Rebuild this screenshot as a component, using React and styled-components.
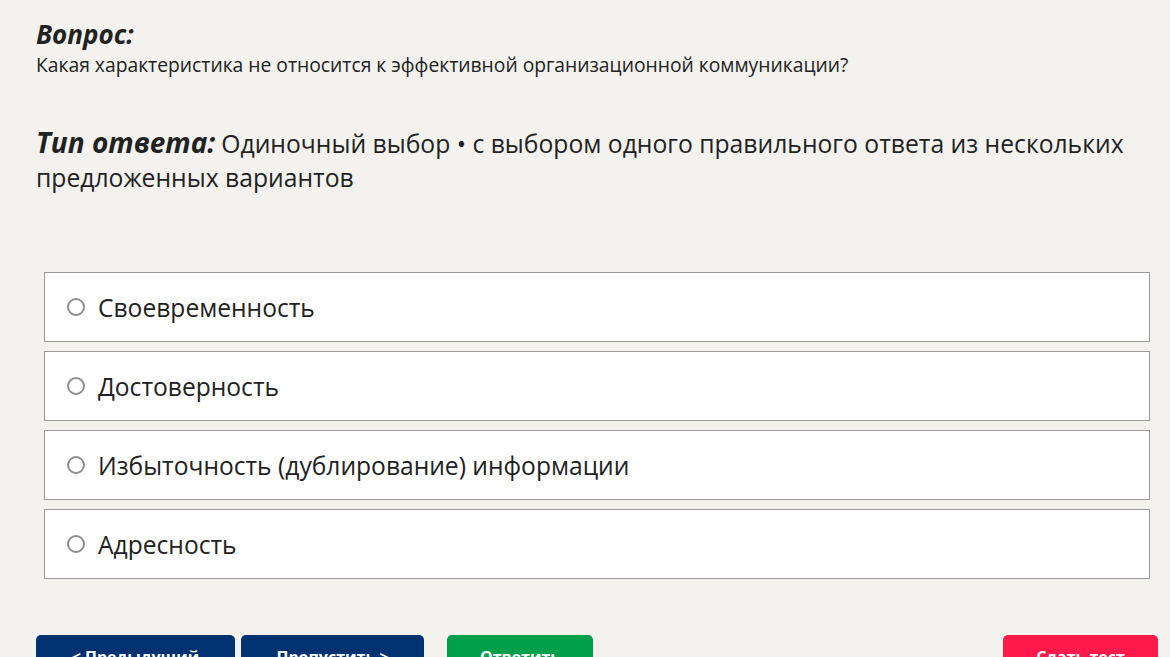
import React from "react";
import styled, { createGlobalStyle } from "styled-components";

const Global = createGlobalStyle`
  html, body { margin: 0; padding: 0; background: #f3f2ef; }
  body { font-family: "Open Sans", "Noto Sans", sans-serif; color: #222; }
`;

const Page = styled.div`
  padding: 17px 12px 0 36px;
  display: flex;
  flex-direction: column;
`;

const Label = styled.h2`
  margin: 0;
  font-size: 26px;
  font-weight: 700;
  font-style: italic;
  line-height: 34px;
  color: #222;
`;

const QuestionText = styled.p`
  margin: 0;
  font-size: 19.3px;
  line-height: 28px;
  color: #222;
`;

const TypeLine = styled.p`
  margin: 46px 0 0;
  font-size: 24.7px;
  line-height: 34px;
  color: #222;
`;

const TypeLabel = styled.span`
  font-size: 28px;
  font-weight: 700;
  font-style: italic;
  margin-right: 6px;
`;

const Options = styled.div`
  margin: 77px 8px 0;
  display: flex;
  flex-direction: column;
  gap: 9px;
`;

const Option = styled.label`
  display: flex;
  align-items: center;
  gap: 13px;
  height: 70px;
  box-sizing: border-box;
  padding-left: 22px;
  background: #fff;
  border: 1.5px solid #9a9a9a;
  font-size: 24.6px;
  color: #222;
  cursor: pointer;
`;

const Radio = styled.span`
  width: 18px;
  height: 18px;
  box-sizing: border-box;
  border-radius: 50%;
  border: 2px solid #8e8e8e;
  background: #fff;
  flex: none;
`;

const Buttons = styled.div`
  margin-top: 56px;
  display: flex;
  align-items: flex-start;
`;

const Button = styled.button`
  height: 42px;
  width: ${(p) => p.$w}px;
  margin-left: ${(p) => p.$ml || 0}px;
  border: none;
  border-radius: 5px;
  background: ${(p) => p.$bg};
  color: #fff;
  font-family: "Open Sans", "Noto Sans", sans-serif;
  font-weight: 700;
  font-size: 16px;
  padding: 10px 0 0;
  display: flex;
  justify-content: center;
  align-items: flex-start;
  line-height: 24px;
`;

const Spacer = styled.div`
  flex: 1;
`;

const options = [
  "Своевременность",
  "Достоверность",
  "Избыточность (дублирование) информации",
  "Адресность",
];

export default function App() {
  return (
    <>
      <Global />
      <Page>
        <Label>Вопрос:</Label>
        <QuestionText>
          Какая характеристика не относится к эффективной организационной коммуникации?
        </QuestionText>
        <TypeLine>
          <TypeLabel>Тип ответа:</TypeLabel>
          Одиночный выбор • с выбором одного правильного ответа из нескольких предложенных вариантов
        </TypeLine>
        <Options>
          {options.map((o) => (
            <Option key={o}>
              <Radio />
              {o}
            </Option>
          ))}
        </Options>
        <Buttons>
          <Button $w={199} $bg="#003170">&lt; Предыдущий</Button>
          <Button $w={183} $ml={6} $bg="#003170">Пропустить &gt;</Button>
          <Button $w={146} $ml={23} $bg="#00a04b">Ответить</Button>
          <Spacer />
          <Button $w={155} $bg="#ff1a4b">Сдать тест</Button>
        </Buttons>
      </Page>
    </>
  );
}
